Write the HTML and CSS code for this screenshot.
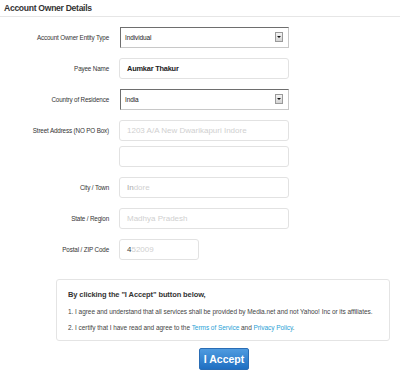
FILE: index.html
```html
<!DOCTYPE html>
<html>
<head>
<meta charset="utf-8">
<link rel="stylesheet" href="styles.css">
</head>
<body>
<div class="page">
  <h2 class="title">Account Owner Details</h2>
  <div class="form">
    <div class="row">
      <div class="label">Account Owner Entity Type</div>
      <div class="select"><span class="sel-text">Individual</span><span class="arrow"></span></div>
    </div>
    <div class="row">
      <div class="label">Payee Name</div>
      <div class="input"><span class="val-bold">Aumkar Thakur</span></div>
    </div>
    <div class="row">
      <div class="label">Country of Residence</div>
      <div class="select"><span class="sel-text">India</span><span class="arrow"></span></div>
    </div>
    <div class="row">
      <div class="label">Street Address (NO PO Box)</div>
      <div class="input"><span class="ph">1203 A/A New Dwarikapuri Indore</span></div>
    </div>
    <div class="row row-tight">
      <div class="label"></div>
      <div class="input"></div>
    </div>
    <div class="row">
      <div class="label">City / Town</div>
      <div class="input"><span class="ph"><span class="dark2">In</span>dore</span></div>
    </div>
    <div class="row">
      <div class="label">State / Region</div>
      <div class="input"><span class="ph">Madhya Pradesh</span></div>
    </div>
    <div class="row">
      <div class="label">Postal / ZIP Code</div>
      <div class="input input-short"><span class="ph"><span class="dark">4</span>52009</span></div>
    </div>
  </div>
  <div class="terms">
    <div class="terms-title">By clicking the "I Accept" button below,</div>
    <p class="terms-item">1. I agree and understand that all services shall be provided by Media.net and not Yahoo! Inc or its affiliates.</p>
    <p class="terms-item">2. I certify that I have read and agree to the <a href="#">Terms of Service</a> and <a href="#">Privacy Policy</a>.</p>
  </div>
  <div class="actions">
    <button class="accept">I Accept</button>
  </div>
</div>
</body>
</html>
```

FILE: styles.css
```css
html, body {
  margin: 0;
  padding: 0;
  background: #ffffff;
}
body {
  font-family: "Liberation Sans", Arial, sans-serif;
  color: #333333;
}
.page {
  width: 400px;
}
.title {
  margin: 0;
  padding: 3px 0 0 4px;
  height: 13px;
  font-size: 8.6px;
  font-weight: bold;
  color: #333333;
  letter-spacing: -0.3px;
  border-bottom: 1px solid #e6e6e6;
}
.form {
  display: flex;
  flex-direction: column;
  gap: 11px;
  padding-top: 10px;
}
.row {
  display: flex;
  align-items: center;
  height: 20px;
}
.row-tight {
  margin-top: -5px;
}
.label {
  width: 119px;
  text-align: right;
  font-size: 6.3px;
  color: #333333;
  padding-right: 10px;
  box-sizing: border-box;
  white-space: nowrap;
  letter-spacing: -0.15px;
}
.input {
  box-sizing: border-box;
  width: 170px;
  height: 21px;
  border: 1px solid #e2e2e2;
  border-radius: 3px;
  display: flex;
  align-items: center;
  padding-left: 7px;
  background: #fff;
}
.input-short {
  width: 80px;
}
.select {
  box-sizing: border-box;
  width: 169px;
  height: 21px;
  margin-left: 1px;
  border: 1px solid #c8c8c8;
  border-top-color: #6e6e6e;
  border-left-color: #6e6e6e;
  display: flex;
  align-items: center;
  justify-content: space-between;
  padding: 0 5px 0 4px;
  background: #fff;
}
.sel-text {
  font-size: 6.5px;
  color: #222;
  letter-spacing: -0.1px;
}
.arrow {
  position: relative;
  width: 6px;
  height: 8px;
  border: 1px solid #9a9a9a;
  background: linear-gradient(#f4f4f4, #d4d4d4);
}
.arrow::after {
  content: "";
  position: absolute;
  left: 1px;
  top: 3px;
  border-left: 2px solid transparent;
  border-right: 2px solid transparent;
  border-top: 2px solid #111;
}
.val-bold {
  font-size: 7.4px;
  font-weight: bold;
  color: #222;
  letter-spacing: -0.2px;
}
.ph {
  font-size: 8px;
  color: #d0d0d0;
  letter-spacing: 0;
}
.dark {
  color: #444;
}
.dark2 {
  color: #aaaaaa;
}
.terms {
  box-sizing: border-box;
  margin: 20px 0 0 56px;
  width: 334px;
  height: 62px;
  border: 1px solid #e4e4e4;
  border-radius: 3px;
  padding: 10px 10px 0 11px;
}
.terms-title {
  font-size: 7.5px;
  font-weight: bold;
  color: #333;
  letter-spacing: -0.1px;
}
.terms-item {
  margin: 9px 0 0 0;
  font-size: 6.5px;
  color: #444;
  letter-spacing: -0.05px;
  white-space: nowrap;
}
.terms-item + .terms-item {
  margin-top: 9px;
}
.terms-item a {
  color: #2a9fd6;
  text-decoration: none;
}
.actions {
  display: flex;
  padding-top: 7px;
  padding-left: 199px;
}
.accept {
  width: 50px;
  height: 22px;
  border: 1px solid #2a6db5;
  border-radius: 2px;
  background: linear-gradient(#4f9be0, #1f6fc2);
  color: #fff;
  font-family: "Liberation Sans", Arial, sans-serif;
  font-size: 10.5px;
  font-weight: bold;
  padding: 0;
}
```
